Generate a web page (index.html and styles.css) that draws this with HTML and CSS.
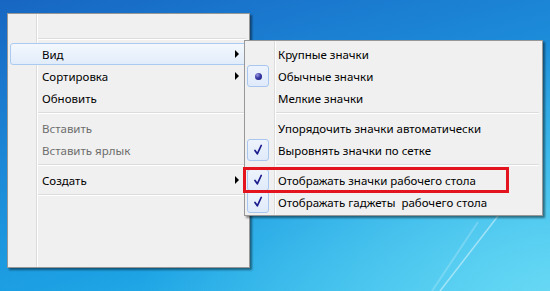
FILE: index.html
```html
<!DOCTYPE html>
<html lang="ru">
<head>
<meta charset="utf-8">
<link rel="stylesheet" href="styles.css">
</head>
<body>
<div class="desktop">
  <svg class="streaks" width="550" height="291" viewBox="0 0 550 291">
    <path d="M498 216 L440 291" stroke="#ffffff" stroke-opacity="0.45" stroke-width="1.5" fill="none"/>
    <path d="M478 222 L432 291" stroke="#ffffff" stroke-opacity="0.2" stroke-width="2" fill="none"/>
  </svg>

  <div class="menu main-menu">
    <div class="blank"></div>
    <div class="sep"></div>
    <div class="item hover"><span class="icon"></span><span class="label">Вид</span><span class="arrow"></span></div>
    <div class="item"><span class="icon"></span><span class="label">Сортировка</span><span class="arrow"></span></div>
    <div class="item"><span class="icon"></span><span class="label">Обновить</span></div>
    <div class="sep"></div>
    <div class="item disabled"><span class="icon"></span><span class="label">Вставить</span></div>
    <div class="item disabled"><span class="icon"></span><span class="label">Вставить ярлык</span></div>
    <div class="sep"></div>
    <div class="item"><span class="icon"></span><span class="label">Создать</span><span class="arrow"></span></div>
    <div class="sep"></div>
  </div>

  <div class="menu sub-menu">
    <div class="item"><span class="icon"></span><span class="label">Крупные значки</span></div>
    <div class="item"><span class="icon checked"><span class="bullet"></span></span><span class="label">Обычные значки</span></div>
    <div class="item"><span class="icon"></span><span class="label">Мелкие значки</span></div>
    <div class="sep"></div>
    <div class="item"><span class="icon"></span><span class="label">Упорядочить значки автоматически</span></div>
    <div class="item"><span class="icon checked"><svg class="check" width="20" height="20" viewBox="0 0 20 20"><path d="M7 10.5 L9.3 13.8 L13.2 5.5" fill="none" stroke="#1c1c8e" stroke-width="1.7" stroke-linejoin="round" stroke-linecap="round"/></svg></span><span class="label">Выровнять значки по сетке</span></div>
    <div class="sep"></div>
    <div class="item"><span class="icon checked"><svg class="check" width="20" height="20" viewBox="0 0 20 20"><path d="M7 10.5 L9.3 13.8 L13.2 5.5" fill="none" stroke="#1c1c8e" stroke-width="1.7" stroke-linejoin="round" stroke-linecap="round"/></svg></span><span class="label">Отображать значки рабочего стола</span></div>
    <div class="item"><span class="icon checked"><svg class="check" width="20" height="20" viewBox="0 0 20 20"><path d="M7 10.5 L9.3 13.8 L13.2 5.5" fill="none" stroke="#1c1c8e" stroke-width="1.7" stroke-linejoin="round" stroke-linecap="round"/></svg></span><span class="label">Отображать гаджеты&nbsp; рабочего стола</span></div>
  </div>

  <div class="callout"></div>
</div>
</body>
</html>
```

FILE: styles.css
```css
* { box-sizing: border-box; }

html, body {
  margin: 0;
  padding: 0;
}

body {
  width: 550px;
  height: 291px;
  overflow: hidden;
  font-family: "Noto Sans", "Open Sans", sans-serif;
  font-size: 11.5px;
  color: #000;
}

.desktop {
  position: relative;
  width: 550px;
  height: 291px;
  background:
    radial-gradient(ellipse 420px 260px at 560px 300px, rgba(110, 220, 245, 0.9), rgba(110, 220, 245, 0) 100%),
    linear-gradient(165deg, #1766c2 0%, #1c86d6 35%, #1da2e4 70%, #33bdec 100%);
}

.streaks {
  position: absolute;
  left: 0;
  top: 0;
}

.menu {
  position: absolute;
  border: 1px solid #979797;
  box-shadow: 2px 2px 2px rgba(0, 0, 0, 0.45);
  padding: 2px;
  display: flex;
  flex-direction: column;
}

.main-menu {
  left: 7px;
  top: 13px;
  width: 243px;
  height: 255px;
  background:
    linear-gradient(to right, transparent 28px, #dcdcdc 28px, #dcdcdc 29px, #ffffff 29px, #ffffff 30px, transparent 30px),
    #f0f0f0;
}

.sub-menu {
  left: 244px;
  top: 40px;
  width: 299px;
  height: 176px;
  background:
    linear-gradient(to right, transparent 29px, #dcdcdc 29px, #dcdcdc 30px, #ffffff 30px, #ffffff 31px, transparent 31px),
    #f0f0f0;
}

.blank {
  height: 19px;
}

.sep {
  height: 8px;
  display: flex;
  flex-direction: column;
  justify-content: center;
  padding-left: 28px;
  padding-right: 1px;
}

.sub-menu .sep {
  padding-left: 29px;
}

.sep::before {
  content: "";
  display: block;
  height: 1px;
  background: #dcdcdc;
  border-bottom: 1px solid #ffffff;
  box-sizing: content-box;
}

.item {
  height: 22px;
  display: flex;
  align-items: center;
  white-space: pre;
  border: 1px solid transparent;
  border-radius: 3px;
}

.item.hover {
  border-color: #aacbef;
  background: linear-gradient(#f4f8fd, #e1ecfa);
}

.item.disabled {
  color: #6d6d6d;
}

.icon {
  width: 22px;
  height: 22px;
  margin: -1px 0 -1px -1px;
  flex: none;
  display: flex;
  align-items: center;
  justify-content: center;
}

.icon.checked {
  border: 1px solid #a9c7ee;
  border-radius: 3px;
  background: linear-gradient(#eef4fc, #dfeafa);
}

.bullet {
  width: 7px;
  height: 7px;
  border-radius: 50%;
  background: radial-gradient(circle at 35% 30%, #9a9ae0 0%, #3a3aa8 45%, #14146a 100%);
}

.label {
  flex: 1;
  padding-left: 10px;
}

.sub-menu .label {
  padding-left: 9px;
}

.arrow {
  width: 0;
  height: 0;
  border-left: 4px solid #000;
  border-top: 4px solid transparent;
  border-bottom: 4px solid transparent;
  margin-right: 7px;
}

.callout {
  position: absolute;
  left: 243px;
  top: 167px;
  width: 266px;
  height: 26px;
  border: 3px solid #e3141d;
}
```
